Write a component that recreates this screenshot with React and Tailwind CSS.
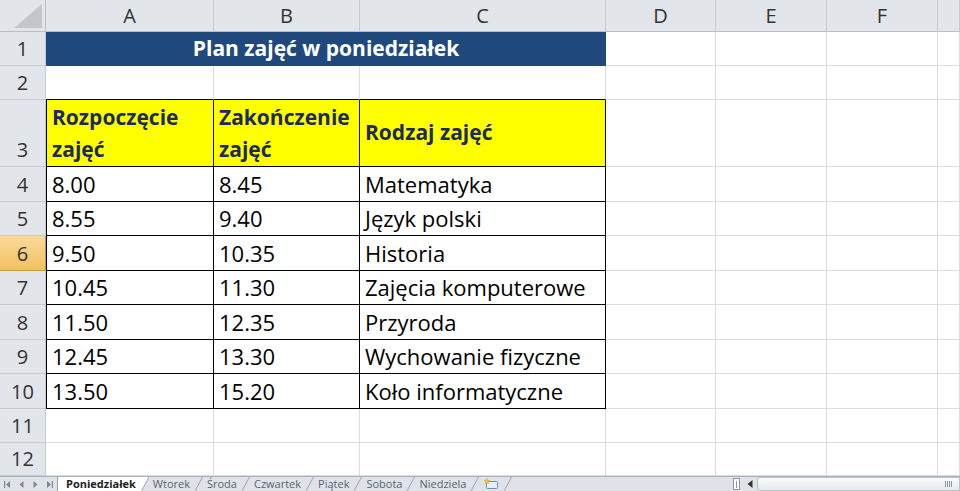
import React from "react";

const GRID = "grid grid-cols-[46px_168px_146px_246px_110px_111px_111px_1fr]";
const GRIDLINE = "border-r border-b border-[#dadcdd]";
const HDR = "bg-[#e2e6eb] text-[#333] text-[20px] flex justify-center";

const ROWS = [
  { n: 4, h: "h-[35px]", v: ["8.00", "8.45", "Matematyka"] },
  { n: 5, h: "h-[34px]", v: ["8.55", "9.40", "Język polski"] },
  { n: 6, h: "h-[35px]", v: ["9.50", "10.35", "Historia"], sel: true },
  { n: 7, h: "h-[34px]", v: ["10.45", "11.30", "Zajęcia komputerowe"] },
  { n: 8, h: "h-[35px]", v: ["11.50", "12.35", "Przyroda"] },
  { n: 9, h: "h-[34px]", v: ["12.45", "13.30", "Wychowanie fizyczne"] },
  { n: 10, h: "h-[35px]", v: ["13.50", "15.20", "Koło informatyczne"] },
];

const TABS = ["Wtorek", "Środa", "Czwartek", "Piątek", "Sobota", "Niedziela"];

function RowHeader({ n, sel }) {
  return (
    <div
      className={
        sel
          ? "bg-gradient-to-b from-[#f9d99a] to-[#f1c15c] text-[#333] text-[20px] flex justify-center items-end pb-[1px] leading-[30px] border-r border-b border-[#c39a3c]"
          : "bg-[#e2e6eb] text-[#333] text-[20px] flex justify-center items-end pb-[1px] leading-[30px] border-r border-b border-[#c5cad1]"
      }
    >
      {n}
    </div>
  );
}

function Empty({ n }) {
  return Array.from({ length: n }).map((_, i) => <div key={i} className={GRIDLINE} />);
}

function Slash() {
  return (
    <svg width="11" height="15" viewBox="0 0 11 15" className="shrink-0">
      <line x1="1.5" y1="15" x2="9.5" y2="0" stroke="#9aa3ad" strokeWidth="1" />
    </svg>
  );
}

function TabBar() {
  return (
    <div className="h-[15px] flex items-stretch bg-[#dfe3e9] border-t border-[#a9b1ba] text-[11px] leading-[14px] text-[#5a6470]">
      <div className="w-[57px] flex items-center gap-[7px] pl-[4px] shrink-0">
        <svg width="7" height="7" viewBox="0 0 7 7"><rect x="0" y="0" width="1.2" height="7" fill="#7d8894" /><path d="M6 0 L2 3.5 L6 7Z" fill="#7d8894" /></svg>
        <svg width="7" height="7" viewBox="0 0 7 7"><path d="M5.5 0 L1.5 3.5 L5.5 7Z" fill="#7d8894" /></svg>
        <svg width="7" height="7" viewBox="0 0 7 7"><path d="M1.5 0 L5.5 3.5 L1.5 7Z" fill="#7d8894" /></svg>
        <svg width="7" height="7" viewBox="0 0 7 7"><path d="M1 0 L5 3.5 L1 7Z" fill="#7d8894" /><rect x="5.8" y="0" width="1.2" height="7" fill="#7d8894" /></svg>
      </div>
      <div className="flex items-stretch bg-white border-l border-[#9aa3ad] pl-[8px] pr-[4px] font-bold text-[#222]">
        <span className="self-center">Poniedziałek</span>
      </div>
      <svg width="10" height="15" viewBox="0 0 10 15" className="shrink-0">
        <path d="M0 0 L9 0 L1 15 L0 15Z" fill="#fff" />
        <line x1="1" y1="15" x2="9" y2="0" stroke="#9aa3ad" strokeWidth="1" />
      </svg>
      {TABS.map((t) => (
        <React.Fragment key={t}>
          <span className="self-center px-[3px]">{t}</span>
          <Slash />
        </React.Fragment>
      ))}
      <div className="flex items-center px-[3px]">
        <svg width="16" height="12" viewBox="0 0 16 12">
          <rect x="3.5" y="3.5" width="11" height="7" rx="1" fill="#e6eef8" stroke="#6f8fb5" />
          <path d="M4 0.5 L4.8 2.4 L6.8 2.6 L5.2 3.8 L5.7 5.8 L4 4.7 L2.3 5.8 L2.8 3.8 L1.2 2.6 L3.2 2.4Z" fill="#f2c230" stroke="#c99a18" strokeWidth="0.4" />
        </svg>
      </div>
      <Slash />
      <div className="flex-1" />
      <div className="w-[7px] my-[1px] mr-[4px] bg-white border border-[#8d96a0] flex items-center justify-center">
        <div className="w-[1px] h-[7px] bg-[#8d96a0]" />
      </div>
      <div className="w-[12px] flex items-center justify-center">
        <svg width="6" height="8" viewBox="0 0 6 8"><path d="M5.5 0 L0.5 4 L5.5 8Z" fill="#333" /></svg>
      </div>
      <div className="w-[203px] ml-[1px] rounded-l-[3px] border border-[#b9c0c8] bg-gradient-to-b from-[#fafbfc] to-[#e6e9ed] flex items-center justify-end pr-[7px]">
        <div className="flex gap-[1px]">
          <div className="w-[1px] h-[6px] bg-[#8d96a0]" />
          <div className="w-[1px] h-[6px] bg-[#8d96a0]" />
          <div className="w-[1px] h-[6px] bg-[#8d96a0]" />
          <div className="w-[1px] h-[6px] bg-[#8d96a0]" />
        </div>
      </div>
    </div>
  );
}

export default function App() {
  return (
    <div className="w-[960px] h-[491px] overflow-hidden bg-white font-['Open_Sans',sans-serif] flex flex-col">
      {/* column headers */}
      <div className={`${GRID} h-[32px] shrink-0`}>
        <div className="bg-[#e2e6eb] border-r border-b border-[#b7bec6] relative">
          <svg width="28" height="24" viewBox="0 0 28 24" className="absolute right-[3px] bottom-[3px]">
            <path d="M28 0 L28 24 L0 24Z" fill="#c3c7cc" />
          </svg>
        </div>
        {["A", "B", "C", "D", "E", "F", ""].map((c, i) => (
          <div key={i} className={`${HDR} items-center border-r border-b border-[#c5cad1] border-b-[#b7bec6]`}>
            {c}
          </div>
        ))}
      </div>

      {/* row 1 */}
      <div className={`${GRID} h-[34px] shrink-0`}>
        <RowHeader n={1} />
        <div className="col-span-3 bg-[#1f497d] text-white font-bold text-[21px] flex items-center justify-center">
          Plan zajęć w poniedziałek
        </div>
        <Empty n={4} />
      </div>

      {/* row 2 */}
      <div className={`${GRID} h-[34px] shrink-0`}>
        <RowHeader n={2} />
        <div className="border-r border-[#dadcdd] border-b border-b-black" />
        <div className="border-r border-[#dadcdd] border-b border-b-black" />
        <div className="border-r border-[#dadcdd] border-b border-b-black" />
        <Empty n={4} />
      </div>

      {/* row 3 */}
      <div className={`${GRID} h-[67px] shrink-0`}>
        <RowHeader n={3} />
        <div className="bg-[#ffff00] border-l border-r border-b border-black pl-[5px] text-[21px] leading-[32px] font-bold text-[#1d2b5a] flex flex-col justify-center">
          <span>Rozpoczęcie</span>
          <span>zajęć</span>
        </div>
        <div className="bg-[#ffff00] border-r border-b border-black pl-[5px] text-[21px] leading-[32px] font-bold text-[#1d2b5a] flex flex-col justify-center">
          <span>Zakończenie</span>
          <span>zajęć</span>
        </div>
        <div className="bg-[#ffff00] border-r border-b border-black pl-[5px] text-[21px] font-bold text-[#1d2b5a] flex items-center">
          Rodzaj zajęć
        </div>
        <Empty n={4} />
      </div>

      {ROWS.map((r) => (
        <div key={r.n} className={`${GRID} ${r.h} shrink-0`}>
          <RowHeader n={r.n} sel={r.sel} />
          <div className="border-l border-r border-b border-black pl-[5px] text-[22px] text-black flex items-center">{r.v[0]}</div>
          <div className="border-r border-b border-black pl-[5px] text-[22px] text-black flex items-center">{r.v[1]}</div>
          <div className="border-r border-b border-black pl-[5px] text-[22px] text-black flex items-center whitespace-nowrap">{r.v[2]}</div>
          <Empty n={4} />
        </div>
      ))}

      {/* rows 11-12 */}
      <div className={`${GRID} h-[34px] shrink-0`}>
        <RowHeader n={11} />
        <Empty n={7} />
      </div>
      <div className={`${GRID} flex-1 min-h-0`}>
        <RowHeader n={12} />
        <Empty n={7} />
      </div>

      <TabBar />
    </div>
  );
}
